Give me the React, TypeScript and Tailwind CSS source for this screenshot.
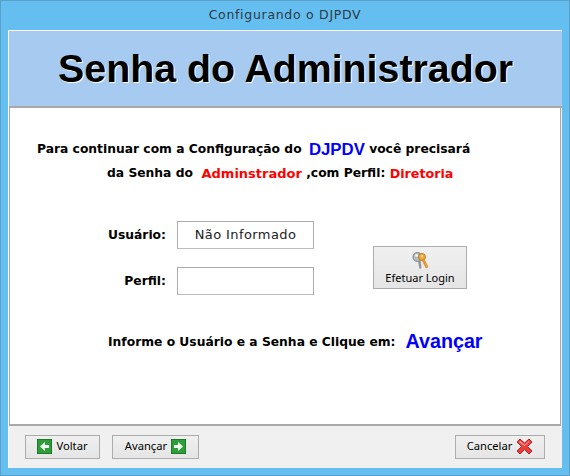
const Btn = ({ className, children }: { className: string; children: React.ReactNode }) => (
  <button className={`flex items-center justify-center h-[24px] border border-[#acacac] bg-gradient-to-b from-[#f0f0f0] to-[#e5e5e5] text-[11.2px] text-black ${className}`}>
    {children}
  </button>
);

const ArrowIcon = ({ right }: { right?: boolean }) => (
  <svg width="15" height="15" viewBox="0 0 15 15" className="shrink-0">
    <rect x="0.5" y="0.5" width="14" height="14" fill="#2f9e3a" stroke="#1c7a28" />
    <path
      d={right ? "M3 6h4V3l5 4.5L7 12V9H3z" : "M12 6H8V3L3 7.5 8 12V9h4z"}
      fill="#f2fbf0"
    />
  </svg>
);

const CloseIcon = () => (
  <svg width="17" height="17" viewBox="0 0 17 17" className="shrink-0">
    <path
      d="M1 4l3-3 4.500 4L13 1l3 3-4.500 4.500L16 13l-3 3-4.500-4.500L4 16l-3-3 4.500-4.500z"
      fill="#ee3b3b"
      stroke="#b52424"
      strokeLinejoin="round"
    />
    <path d="M3 4l1-1 4.500 4L13 3l.5.5L8.500 8z" fill="#ffb0a8" />
  </svg>
);

const KeysIcon = () => (
  <svg width="18" height="20" viewBox="0 0 18 20">
    <circle cx="6.500" cy="6" r="4.500" fill="#b5bcc0" stroke="#7e8689" />
    <circle cx="5.500" cy="4.500" r="1.300" fill="#fff" />
    <path d="M7 10l1.500 8 2-1-1-8z" fill="#8d9599" />
    <circle cx="11" cy="6" r="3.500" fill="#f2a93b" stroke="#c47c1a" />
    <path d="M11 9l4 8 2-1-4-8z" fill="#eb9a2c" stroke="#c47c1a" strokeWidth="0.5" />
    <circle cx="11" cy="5" r="1" fill="#fff3d0" />
  </svg>
);

const App = () => {
  return (
    <div className="w-[570px] h-[476px] flex flex-col bg-[#65bef0] border border-[#5a9fc8] px-[7px] pb-[7px] font-['Noto_Sans',sans-serif] text-black overflow-hidden">
      <div className="h-[29px] shrink-0 flex items-center justify-center font-['DejaVu_Sans',sans-serif] text-[12.5px] tracking-[0.7px] text-[#2b3a44]">
        Configurando o DJPDV
      </div>
      <div className="flex-1 flex flex-col bg-[#f0f0f0] border-t border-l border-white">
        <div className="h-[77px] shrink-0 flex items-center justify-center bg-[#a6caf0] border-b-2 border-[#a9a9a9] font-['Liberation_Sans',sans-serif] text-[39.300px] font-bold [text-shadow:1px_1px_0_#fff]">
          Senha do Administrador
        </div>
        <div className="h-[318px] shrink-0 mr-[1px] bg-white border-x border-b-2 border-[#a9a9a9] flex flex-col font-['DejaVu_Sans',sans-serif]">
          <p className="mt-[31px] pl-[27px] h-[21px] flex items-center text-[12.300px] font-bold whitespace-pre">
            Para continuar com a Configuração do <span className="ml-[3px] font-['Liberation_Sans',sans-serif] text-[16.800px] text-[#0000ff]">DJPDV</span> você precisará
          </p>
          <p className="mt-[3px] pl-[97px] h-[21px] flex items-center text-[12.300px] font-bold whitespace-pre">
            da Senha do  <span className="text-[#ff0000] text-[13px]">Adminstrador</span> ,com Perfil: <span className="text-[#ff0000] text-[12.700px]">Diretoria</span>
          </p>
          <div className="mt-[37px] flex">
            <div className="w-[304px] flex flex-col gap-[18px]">
              <div className="flex items-center">
                <span className="w-[167px] pr-[11px] text-right text-[12.300px] font-bold">Usuário:</span>
                <div className="w-[137px] h-[28px] flex items-center justify-center border border-[#acacac] border-b-[#bcbcbc] text-[13px] tracking-[0.4px] text-[#222]">
                  Não Informado
                </div>
              </div>
              <div className="flex items-center">
                <span className="w-[167px] pr-[11px] text-right text-[12.300px] font-bold">Perfil:</span>
                <div className="w-[137px] h-[28px] border border-[#acacac] border-b-[#bcbcbc]" />
              </div>
            </div>
            <button className="ml-[59px] mt-[25px] w-[94px] h-[43px] flex flex-col items-center justify-center border border-[#acacac] bg-gradient-to-b from-[#f0f0f0] to-[#e5e5e5] font-['Noto_Sans',sans-serif] text-[11px] leading-[14px]">
              <KeysIcon />
              Efetuar Login
            </button>
          </div>
          <div className="mt-[32px] pl-[98px] flex items-center">
            <span className="text-[12.300px] font-bold">Informe o Usuário e a Senha e Clique em:</span>
            <span className="ml-[10px] font-['Liberation_Sans',sans-serif] text-[19.700px] font-bold text-[#0000ff]">Avançar</span>
          </div>
        </div>
        <div className="flex-1 flex items-center pl-[16px] pr-[17px] pb-[1px]">
          <Btn className="w-[75px] gap-[4px]">
            <ArrowIcon />
            Voltar
          </Btn>
          <Btn className="w-[87px] gap-[4px] ml-[12px]">
            Avançar
            <ArrowIcon right />
          </Btn>
          <Btn className="w-[90px] gap-[4px] ml-auto">
            Cancelar
            <CloseIcon />
          </Btn>
        </div>
      </div>
    </div>
  );
};

export default App;
